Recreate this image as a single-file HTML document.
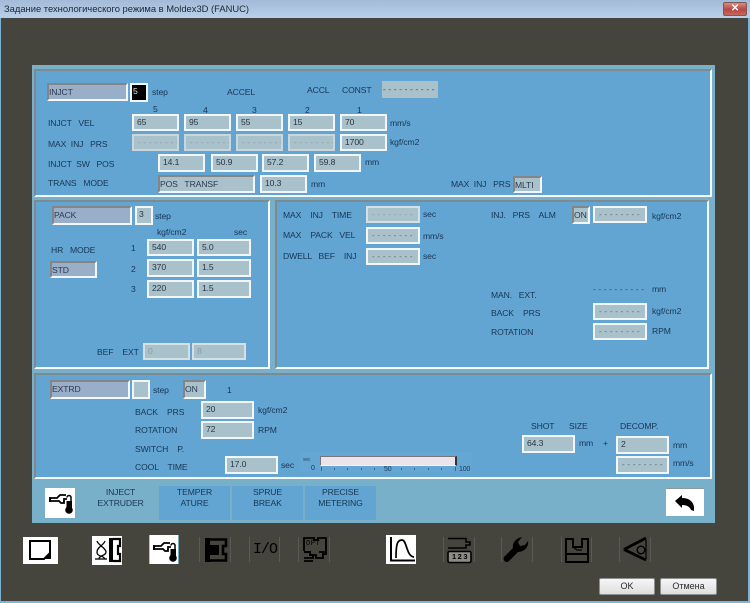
<!DOCTYPE html>
<html><head><meta charset="utf-8"><style>
html,body{margin:0;padding:0;background:#7db4d6}
#r{position:relative;width:750px;height:603px;overflow:hidden;background:#7db4d6;font-family:"Liberation Sans",sans-serif;font-size:8.6px;letter-spacing:-.12px;color:#183554;filter:blur(.25px)}
#r div{position:absolute;box-sizing:border-box}
.t{white-space:pre;line-height:12px;height:12px}
.s{border-top:2px solid #7d8a90;border-left:2px solid #7d8a90;border-bottom:2px solid #f6fafb;border-right:2px solid #f6fafb;background:#62a5d3}
.f{background:#a9c1cb;border:2px solid #f2f6f7;color:#2b3540;white-space:pre;line-height:12px;padding:0 0 0 3px}
.d{color:#5a6a72;letter-spacing:2.75px;font-size:8px;line-height:13px;padding-left:4px;overflow:hidden}
.g{color:#8b9ba3}
.c{background:#99aec8;border-top:2px solid #858585;border-left:2px solid #858585;border-bottom:2px solid #f4f7f8;border-right:2px solid #f4f7f8;color:#2b3a50;line-height:14px;padding-left:0;white-space:pre}
.m{background:#a9c1cb}
.tab{background:#62a5d3;text-align:center;line-height:10.5px;padding-top:1px;color:#183554}
.b{background:linear-gradient(#f6f6f6,#dedede);border:1px solid #8f9191;border-radius:2px;text-align:center;color:#2a2a2a;line-height:15px;font-size:9px;letter-spacing:0}
svg{position:absolute;left:0;top:0}
</style></head><body><div id="r">
<div style="left:0;top:0;width:750px;height:18px;background:linear-gradient(#a3bbd7,#b9d0ea)"></div>
<div class="t" style="left:4px;top:3px;font-size:9.4px;letter-spacing:0;color:#1c2733">Задание технологического режима в Moldex3D (FANUC)</div>
<div style="left:723px;top:2px;width:24px;height:14px;background:linear-gradient(#d98a80,#b8473f 55%,#c4675e);border:1px solid #7b5a5a;border-radius:2px;color:#fff;text-align:center;font-weight:bold;font-size:10px;line-height:11px">✕</div>
<div style="left:1px;top:18px;width:747px;height:583px;background:#45443d"></div>

<div style="left:32px;top:65px;width:683px;height:458px;background:#79b0c9"></div>
<div class="s" style="left:34px;top:69px;width:678px;height:128px"></div>
<div class="s" style="left:34px;top:200px;width:236px;height:169px"></div>
<div class="s" style="left:275px;top:200px;width:434px;height:169px"></div>
<div class="s" style="left:34px;top:373px;width:678px;height:106px"></div>

<!-- section 1 -->
<div class="c" style="left:47px;top:83px;width:81px;height:18px">INJCT</div>
<div style="left:130px;top:83px;width:18px;height:19px;background:#000;border:2px solid #f2f6f7;color:#f3e8c8;line-height:13px;padding-left:1px">5</div>
<div class="t" style="left:152px;top:86px">step</div>
<div class="t" style="left:227px;top:86px">ACCEL</div>
<div class="t" style="left:307px;top:84px">ACCL</div>
<div class="t" style="left:342px;top:84px">CONST</div>
<div class="f d" style="left:382px;top:81px;width:56px;height:17px;border:0;color:#3c4a50;padding:2px 0 0 1px">----------</div>
<div class="t" style="left:153px;top:103px">5</div><div class="t" style="left:203px;top:104px">4</div><div class="t" style="left:252px;top:104px">3</div><div class="t" style="left:305px;top:104px">2</div><div class="t" style="left:357px;top:104px">1</div>
<div class="t" style="left:48px;top:117px">INJCT   VEL</div>
<div class="t" style="left:48px;top:138px">MAX  INJ   PRS</div>
<div class="t" style="left:48px;top:158px">INJCT  SW   POS</div>
<div class="t" style="left:48px;top:177px">TRANS   MODE</div>
<div class="f" style="left:132px;top:114px;width:47px;height:17px">65</div>
<div class="f" style="left:184px;top:114px;width:47px;height:17px">95</div>
<div class="f" style="left:236px;top:114px;width:47px;height:17px">55</div>
<div class="f" style="left:288px;top:114px;width:47px;height:17px">15</div>
<div class="f" style="left:340px;top:114px;width:47px;height:17px">70</div>
<div class="f d g" style="left:132px;top:134px;width:47px;height:17px;border-color:#c9d6dc">--------</div>
<div class="f d g" style="left:184px;top:134px;width:47px;height:17px;border-color:#c9d6dc">--------</div>
<div class="f d g" style="left:236px;top:134px;width:47px;height:17px;border-color:#c9d6dc">--------</div>
<div class="f d g" style="left:288px;top:134px;width:47px;height:17px;border-color:#c9d6dc">--------</div>
<div class="f" style="left:340px;top:134px;width:47px;height:17px">1700</div>
<div class="f" style="left:158px;top:154px;width:47px;height:18px">14.1</div>
<div class="f" style="left:211px;top:154px;width:47px;height:18px">50.9</div>
<div class="f" style="left:262px;top:154px;width:47px;height:18px">57.2</div>
<div class="f" style="left:314px;top:154px;width:47px;height:18px">59.8</div>
<div class="c m" style="left:158px;top:175px;width:97px;height:18px">POS   TRANSF</div>
<div class="f" style="left:260px;top:175px;width:47px;height:18px">10.3</div>
<div class="t" style="left:311px;top:178px">mm</div>
<div class="t" style="left:390px;top:117px">mm/s</div>
<div class="t" style="left:390px;top:136px">kgf/cm2</div>
<div class="t" style="left:365px;top:156px">mm</div>
<div class="t" style="left:451px;top:178px">MAX  INJ   PRS</div>
<div class="c m" style="left:513px;top:176px;width:29px;height:17px">MLTI</div>

<!-- section 2 left -->
<div class="c" style="left:52px;top:206px;width:80px;height:19px">PACK</div>
<div class="f" style="left:135px;top:206px;width:18px;height:19px;padding-left:2px">3</div>
<div class="t" style="left:155px;top:210px">step</div>
<div class="t" style="left:157px;top:226px">kgf/cm2</div>
<div class="t" style="left:234px;top:226px">sec</div>
<div class="t" style="left:51px;top:244px">HR   MODE</div>
<div class="c" style="left:50px;top:261px;width:47px;height:17px">STD</div>
<div class="t" style="left:131px;top:242px">1</div><div class="t" style="left:131px;top:263px">2</div><div class="t" style="left:131px;top:283px">3</div>
<div class="f" style="left:147px;top:239px;width:47px;height:17px">540</div>
<div class="f" style="left:197px;top:239px;width:54px;height:17px">5.0</div>
<div class="f" style="left:147px;top:259px;width:47px;height:18px">370</div>
<div class="f" style="left:197px;top:259px;width:54px;height:18px">1.5</div>
<div class="f" style="left:147px;top:280px;width:47px;height:18px">220</div>
<div class="f" style="left:197px;top:280px;width:54px;height:18px">1.5</div>
<div class="t" style="left:97px;top:346px">BEF    EXT</div>
<div class="f g" style="left:143px;top:343px;width:47px;height:17px;border-color:#d5e0e4">0</div>
<div class="f g" style="left:192px;top:343px;width:54px;height:17px;border-color:#d5e0e4">8</div>

<!-- section 2 right -->
<div class="t" style="left:283px;top:209px">MAX    INJ    TIME</div>
<div class="t" style="left:283px;top:229px">MAX    PACK   VEL</div>
<div class="t" style="left:283px;top:250px">DWELL   BEF    INJ</div>
<div class="f d g" style="left:366px;top:206px;width:54px;height:17px;border-color:#d5e0e4">--------</div>
<div class="f d" style="left:366px;top:227px;width:54px;height:17px">--------</div>
<div class="f d" style="left:366px;top:248px;width:54px;height:17px">--------</div>
<div class="t" style="left:423px;top:208px">sec</div>
<div class="t" style="left:423px;top:230px">mm/s</div>
<div class="t" style="left:423px;top:250px">sec</div>
<div class="t" style="left:491px;top:209px">INJ.   PRS    ALM</div>
<div class="c m" style="left:572px;top:206px;width:18px;height:18px">ON</div>
<div class="f d" style="left:593px;top:206px;width:54px;height:17px">--------</div>
<div class="t" style="left:652px;top:210px">kgf/cm2</div>
<div class="t" style="left:593px;top:284px;font-size:8px;letter-spacing:2.7px;color:#2e4458">----------</div>
<div class="t" style="left:652px;top:283px">mm</div>
<div class="t" style="left:491px;top:289px">MAN.   EXT.</div>
<div class="t" style="left:491px;top:307px">BACK    PRS</div>
<div class="t" style="left:491px;top:326px">ROTATION</div>
<div class="f d" style="left:593px;top:303px;width:54px;height:17px">--------</div>
<div class="f d" style="left:593px;top:323px;width:54px;height:17px">--------</div>
<div class="t" style="left:652px;top:305px">kgf/cm2</div>
<div class="t" style="left:652px;top:325px">RPM</div>

<!-- section 3 -->
<div class="c" style="left:50px;top:380px;width:80px;height:19px">EXTRD</div>
<div class="f" style="left:132px;top:380px;width:18px;height:19px"></div>
<div class="t" style="left:153px;top:384px">step</div>
<div class="c m" style="left:183px;top:380px;width:23px;height:19px">ON</div>
<div class="t" style="left:227px;top:384px">1</div>
<div class="t" style="left:135px;top:406px">BACK    PRS</div>
<div class="t" style="left:135px;top:424px">ROTATION</div>
<div class="t" style="left:135px;top:443px">SWITCH    P.</div>
<div class="t" style="left:135px;top:461px">COOL    TIME</div>
<div class="f" style="left:201px;top:401px;width:53px;height:18px">20</div>
<div class="f" style="left:201px;top:421px;width:53px;height:18px">72</div>
<div class="t" style="left:258px;top:404px">kgf/cm2</div>
<div class="t" style="left:258px;top:424px">RPM</div>
<div class="f" style="left:225px;top:456px;width:53px;height:18px">17.0</div>
<div class="t" style="left:281px;top:459px">sec</div>
<div style="left:300px;top:452px;width:172px;height:20px;background:#65a7d4"></div>
<div style="left:320px;top:456px;width:137px;height:10px;background:#ebe4ea;border-top:1px solid #777;border-left:1px solid #777;border-right:2px solid #333;border-bottom:1px solid #f5f5f5"></div>
<div class="t" style="left:303px;top:457px;font-size:5px;line-height:7px;height:7px;color:#2a4a6c">sec</div>
<div class="t" style="left:311px;top:464px;font-size:7px;line-height:9px;height:9px">0</div>
<div class="t" style="left:384px;top:465px;font-size:7px;line-height:9px;height:9px">50</div>
<div class="t" style="left:459px;top:465px;font-size:7px;line-height:9px;height:9px">100</div>
<svg width="750" height="603" style="pointer-events:none"><g fill="#44627c"><rect x="321" y="467" width="1" height="4"/><rect x="334" y="468" width="1" height="2"/><rect x="347" y="468" width="1" height="2"/><rect x="361" y="468" width="1" height="2"/><rect x="374" y="468" width="1" height="2"/><rect x="401" y="468" width="1" height="2"/><rect x="414" y="468" width="1" height="2"/><rect x="428" y="468" width="1" height="2"/><rect x="441" y="468" width="1" height="2"/><rect x="455" y="467" width="1" height="4"/></g></svg>
<div class="t" style="left:531px;top:420px">SHOT</div><div class="t" style="left:569px;top:420px">SIZE</div><div class="t" style="left:620px;top:420px">DECOMP.</div>
<div class="f" style="left:522px;top:435px;width:53px;height:18px">64.3</div>
<div class="t" style="left:579px;top:437px">mm</div><div class="t" style="left:603px;top:437px">+</div>
<div class="f" style="left:616px;top:436px;width:53px;height:18px">2</div>
<div class="t" style="left:673px;top:439px">mm</div>
<div class="f d" style="left:616px;top:456px;width:53px;height:18px">--------</div>
<div class="t" style="left:673px;top:457px">mm/s</div>

<!-- tabs -->
<div class="tab" style="left:85px;top:486px;width:71px;height:34px;background:none">INJECT<br>EXTRUDER</div>
<div class="tab" style="left:159px;top:486px;width:71px;height:34px">TEMPER<br>ATURE</div>
<div class="tab" style="left:232px;top:486px;width:71px;height:34px">SPRUE<br>BREAK</div>
<div class="tab" style="left:305px;top:486px;width:71px;height:34px">PRECISE<br>METERING</div>
<div style="left:45px;top:488px;width:30px;height:30px;background:#fff"></div>
<div style="left:666px;top:488px;width:38px;height:28px;background:#fff;border-top:1px solid #8a9aa2"></div>

<!-- bottom icons backgrounds -->
<div style="left:23px;top:537px;width:35px;height:27px;background:#fff"></div>
<div style="left:92px;top:536px;width:30px;height:29px;background:#fff"></div>
<div style="left:149px;top:535px;width:30px;height:29px;background:#fff;border-left:1px solid #9cc;border-right:1px solid #7ab"></div>
<div style="left:386px;top:535px;width:30px;height:29px;background:#fff"></div>

<svg width="750" height="603" viewBox="0 0 750 603" fill="none" stroke="#000">
<!-- tab icon: faucet + thermometer -->
<g transform="translate(-104,-48)">
<path d="M154 546h7l3-3h6M154 549h9l2 2h3v-4h3" stroke-width="1.8"/><path d="M154 545v5" stroke-width="2"/>
<path d="M171 545.500a2 2 0 0 1 4 0v7" stroke-width="1.5"/><path d="M170.500 549h5.500v7h-5.500z" fill="#000" stroke="none"/><circle cx="173" cy="558" r="3.800" fill="#000" stroke="none"/>
</g>
<!-- back arrow -->
<path d="M675 501l7-6v3c5 0 11 2 12 9v4l-3-1c-1-3-4-5-9-5v3z" fill="#000" stroke="none"/>
<!-- 1 -->
<path d="M30 541h20v12l-6 6h-14z" stroke-width="2"/><path d="M45 559l6-6v6z" fill="#000" stroke="none"/>
<!-- 2 -->
<g stroke-width="1.3"><path d="M97 541c1 4 9 7 9 11s-7 3-7 7M105 541c-1 4-8 6-8 11s6 3 8 7"/><path d="M95 559h12"/></g>
<path d="M109 538h4v24h-4z" fill="#000" stroke="none"/><path d="M113 539h7v7h-2v8h2v7h-7" stroke-width="2.2"/>
<!-- 3 -->
<path d="M154 546h7l3-3h6M154 549h9l2 2h3v-4h3" stroke-width="1.8"/><path d="M154 545v5" stroke-width="2"/>
<path d="M171 545.500a2 2 0 0 1 4 0v7" stroke-width="1.5"/><path d="M170.500 549h5.500v7h-5.500z" fill="#000" stroke="none"/><circle cx="173" cy="558" r="3.800" fill="#000" stroke="none"/>
<!-- separators -->
<g stroke="#5a5b55"><path d="M199.500 537v25M230.500 537v25M249.500 537v25M279.500 537v25M298.500 537v25M329.500 537v25M443.500 537v25M474.500 537v25M501.500 537v25M532.500 537v25M561.500 537v25M591.500 537v25M619.500 537v25M650.500 537v25"/></g>
<!-- 4 -->
<path d="M205 538h5v7h9v10h-9v7h-5z" fill="#000" stroke="none"/><path d="M210 539.500h16v6.500h-3v8h3v6.500h-16" stroke-width="2.6"/>
<!-- 6 -->
<path d="M304 551v-13h10v2h4v-2h8v16h-3v4h-7v-3h-3v3h-9" stroke-width="1.8"/><path d="M304 552h6v3h3" stroke-width="2"/><path d="M304 561h9M319 552h6" stroke-width="1.8"/>
<!-- 7 -->
<path d="M391 537v23.500h24" stroke-width="2"/><path d="M396 558C396 545 397 540 402 540C407 540 406 556 414 557" stroke-width="1.7"/>
<!-- 8 -->
<path d="M448 538.500h18v3.500h4v3h-4v3h-18" stroke-width="1.6"/><rect x="448" y="551.500" width="23" height="11" rx="1.500" stroke-width="1.6" fill="#8d8d85"/>
<!-- 9 wrench -->
<path d="M506 562c-2-1-3-3-2-5l9-9c-1-5 3-10 9-11l-4 5 2 4 5-1 3-4c1 6-4 11-10 11l-9 9c-1 1-2 1-3 1z" fill="#000" stroke="none"/>
<!-- 10 -->
<path d="M566 539h7v8h9v-8h6v23h-22z" stroke-width="1.9"/><path d="M566 554h22" stroke-width="1.9"/><path d="M573 547l4 3h5" stroke-width="1.2"/>
<!-- 11 -->
<path d="M624 549.500L646 538M624 549.500L646 560" stroke-width="2.8"/><path d="M646 540v19" stroke-width="1.2"/><circle cx="641" cy="550" r="3.800" stroke-width="1.4"/>
</svg>
<div class="t" style="left:253px;top:542px;font-family:'Liberation Mono',monospace;font-size:15px;line-height:16px;height:16px;color:#000;letter-spacing:-1px">I/O</div>
<div class="t" style="left:306px;top:541px;font-family:'Liberation Mono',monospace;font-size:7px;line-height:7px;height:7px;letter-spacing:.6px;color:#000">OPT</div>
<div class="t" style="left:452px;top:552px;font-size:7.500px;line-height:9px;height:9px;color:#000;font-weight:bold;letter-spacing:1.500px">123</div>
<div class="b" style="left:599px;top:578px;width:56px;height:17px">OK</div>
<div class="b" style="left:660px;top:578px;width:57px;height:17px">Отмена</div>
</div></body></html>
